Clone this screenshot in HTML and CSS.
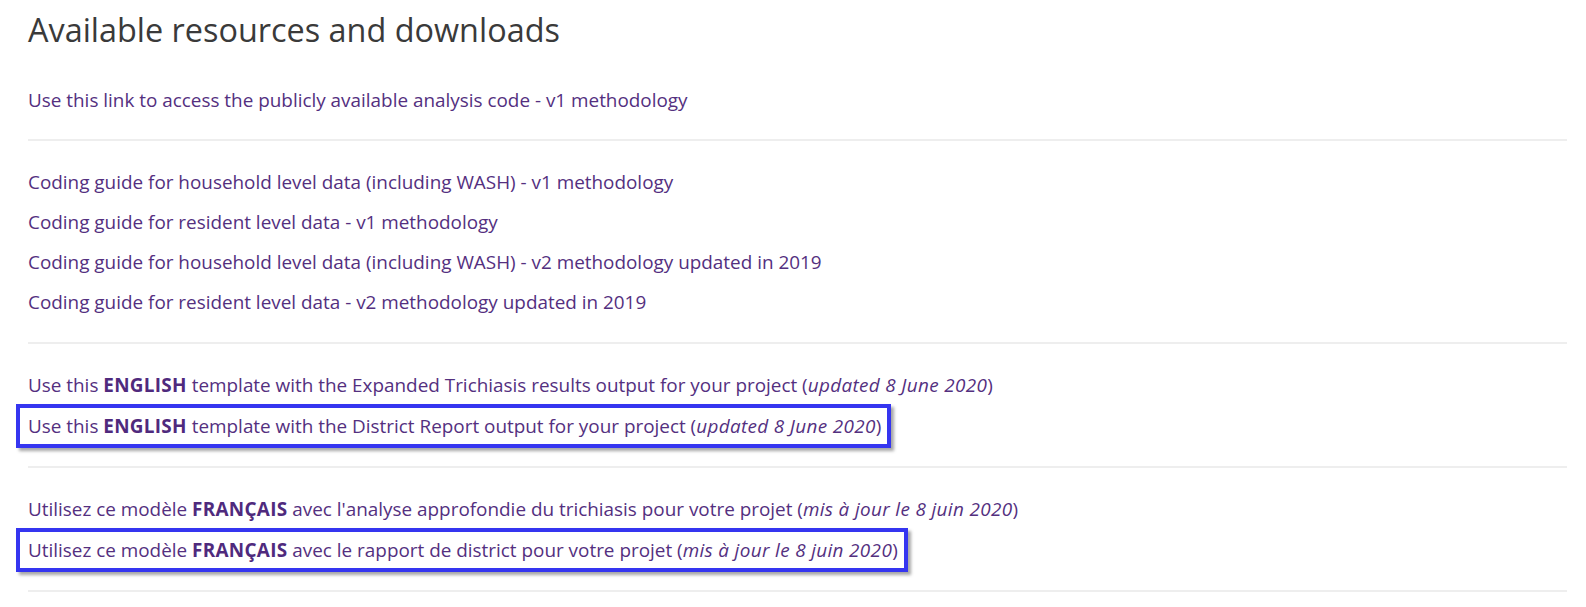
FILE: index.html
```html
<!DOCTYPE html>
<html lang="en">
<head>
<meta charset="utf-8">
<title>Available resources and downloads</title>
<link rel="stylesheet" href="styles.css">
</head>
<body>
<main class="page">
  <h2 class="title">Available resources and downloads</h2>
  <section class="group">
    <p><a href="#">Use this link to access the publicly available analysis code - v1 methodology</a></p>
  </section>
  <section class="group">
    <p><a href="#">Coding guide for household level data (including WASH) - v1 methodology</a></p>
    <p><a href="#">Coding guide for resident level data - v1 methodology</a></p>
    <p><a href="#">Coding guide for household level data (including WASH) - v2 methodology updated in 2019</a></p>
    <p><a href="#">Coding guide for resident level data - v2 methodology updated in 2019</a></p>
  </section>
  <section class="group">
    <p><a href="#">Use this <strong>ENGLISH</strong> template with the Expanded Trichiasis results output for your project (<em>updated 8 June 2020</em>)</a></p>
    <p class="tight"><span class="hl"><a href="#">Use this <strong>ENGLISH</strong> template with the District Report output for your project (<em>updated 8 June 2020</em>)</a></span></p>
  </section>
  <section class="group">
    <p><a href="#">Utilisez ce modèle <strong>FRANÇAIS</strong> avec l'analyse approfondie du trichiasis pour votre projet (<em>mis à jour le 8 juin 2020</em>)</a></p>
    <p class="loose"><span class="hl"><a href="#">Utilisez ce modèle <strong>FRANÇAIS</strong> avec le rapport de district pour votre projet (<em>mis à jour le 8 juin 2020</em>)</a></span></p>
  </section>
</main>
</body>
</html>
```

FILE: styles.css
```css
html, body {
  margin: 0;
  padding: 0;
  background: #ffffff;
}

body {
  font-family: "Open Sans", "Liberation Sans", sans-serif;
  font-size: 18.9px;
  line-height: 24px;
  color: #333333;
}

.page {
  padding: 0 19px 0 28px;
}

.title {
  margin: 0;
  padding-top: 9px;
  font-size: 32.4px;
  line-height: 40px;
  font-weight: 400;
  color: #3a3a3a;
  letter-spacing: 0;
}

.group {
  border-bottom: 2px solid #eeeeee;
  padding: 29px 0 28px;
}

.group:first-of-type {
  padding-top: 39px;
  padding-bottom: 27px;
}

.group p {
  margin: 0 0 16px;
}

.group p:last-child {
  margin-bottom: 0;
}

.group p.tight {
  margin-top: 17px;
}

.group p.loose {
  margin-top: 17px;
}

.group a {
  color: #54307f;
  text-decoration: none;
}

.group strong {
  font-weight: 700;
  color: #4f2a7d;
  letter-spacing: 0.3px;
}

.group em {
  font-style: italic;
  letter-spacing: 0.35px;
}

.hl {
  position: relative;
  display: inline-block;
}

.hl::after {
  content: "";
  position: absolute;
  top: -10px;
  bottom: -10px;
  left: -12px;
  right: -10px;
  border: 4px solid #3535f0;
  box-shadow: 3px 3px 3px rgba(0, 0, 0, 0.35);
  pointer-events: none;
}
```
